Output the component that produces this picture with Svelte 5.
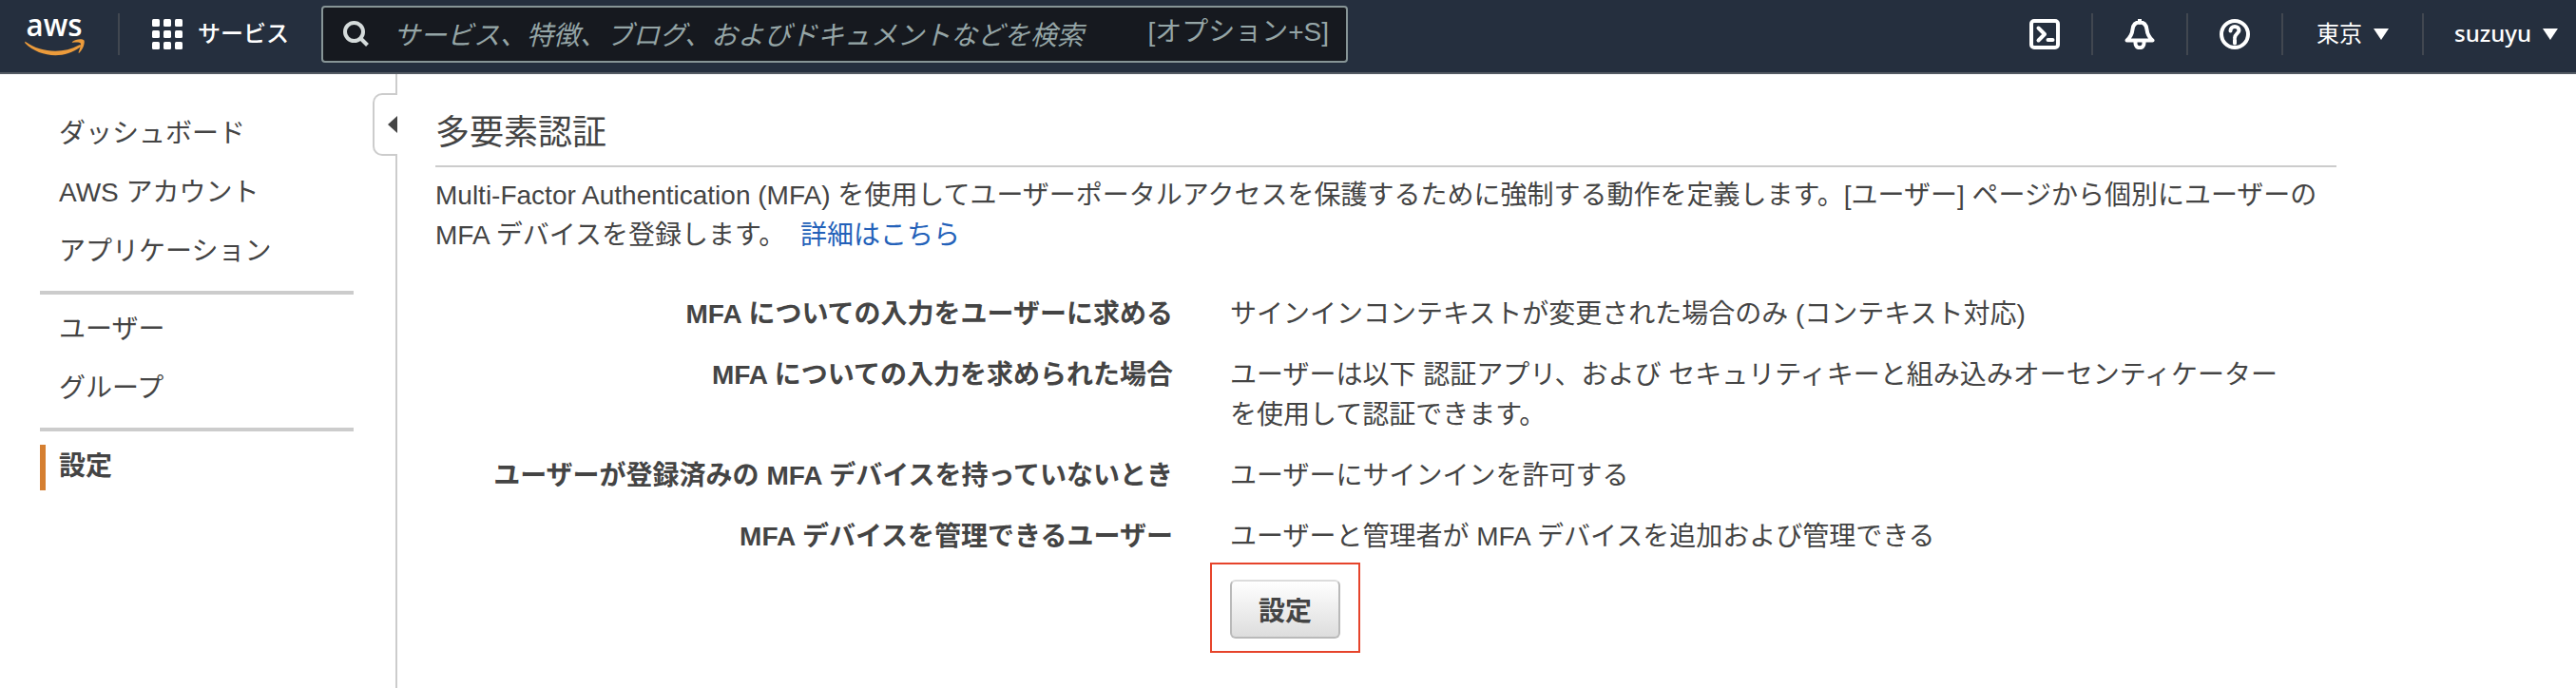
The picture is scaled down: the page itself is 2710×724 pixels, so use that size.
<script>
  const navGroups = [
    ['ダッシュボード', 'AWS アカウント', 'アプリケーション'],
    ['ユーザー', 'グループ'],
  ];
  const settings = [
    { label: 'MFA についての入力をユーザーに求める', lines: ['サインインコンテキストが変更された場合のみ (コンテキスト対応)'] },
    {
      label: 'MFA についての入力を求められた場合',
      lines: [
        'ユーザーは以下 認証アプリ、および セキュリティキーと組み込みオーセンティケーター',
        'を使用して認証できます。',
      ],
    },
    { label: 'ユーザーが登録済みの MFA デバイスを持っていないとき', lines: ['ユーザーにサインインを許可する'] },
    { label: 'MFA デバイスを管理できるユーザー', lines: ['ユーザーと管理者が MFA デバイスを追加および管理できる'] },
  ];
  const cells = [0, 1, 2, 3, 4, 5, 6, 7, 8];
</script>

<div class="page">
  <header>
    <svg class="logo" width="66" height="44" viewBox="0 0 66 44">
      <text x="1.5" y="23" textLength="59" lengthAdjust="spacingAndGlyphs">aws</text>
      <path d="M1 29 C17 40.500 40 42 57 32.500 C59 31.500 60 33 58.500 34.500 C41 48 15 45 0.500 30.500 C0 29.500 0.200 28.500 1 29Z" />
      <path d="M50 29 C54 25.500 61 25.500 62.500 27.500 C63.500 30 61.500 37 57.500 40.500 C57 41 56.300 40.600 56.600 40 C58 36.500 59.500 32 58.700 30.500 C57.500 29 53.500 29.500 50.500 29.800 C49.800 29.800 49.500 29.400 50 29Z" />
    </svg>
    <i class="bar first"></i>
    <div class="services">
      <svg width="32" height="32" viewBox="0 0 32 32">
        {#each cells as c}
          <rect x={(c % 3) * 12} y={Math.floor(c / 3) * 12} width="8" height="8" rx="1.5" />
        {/each}
      </svg>
      <span>サービス</span>
    </div>
    <div class="search">
      <svg width="30" height="30" viewBox="0 0 30 30">
        <circle cx="12.500" cy="12.500" r="9.500" />
        <path d="M19 19 L26.500 26.500" />
      </svg>
      <em>サービス、特徴、ブログ、およびドキュメントなどを検索</em>
      <span>[オプション+S]</span>
    </div>
    <div class="tools">
      <div class="tool">
        <svg width="32" height="32" viewBox="0 0 32 32">
          <rect x="2" y="2" width="28" height="28" rx="3" />
          <path d="M9.500 9.500 L16 16 L9.500 22.500 M19.500 22 H24.500" />
        </svg>
      </div>
      <div class="tool">
        <svg width="32" height="32" viewBox="0 0 32 32">
          <path d="M16 0.500 V4 M2.500 22.500 C6.500 19 8 16 8.500 11 C9 6 12 3.500 16 3.500 C20 3.500 23 6 23.500 11 C24 16 25.500 19 29.500 22.500 Z M11.500 23 V25.500 C11.500 28.500 13.500 30.200 16 30.200 C18.500 30.200 20.500 28.500 20.500 25.500 V23" />
        </svg>
      </div>
      <div class="tool">
        <svg width="32" height="32" viewBox="0 0 32 32">
          <circle cx="16" cy="16" r="14" />
          <path d="M11.500 12.500 C11.500 9.500 13.500 8 16 8 C18.500 8 20.500 9.500 20.500 12 C20.500 15 16 15.500 16 20 M16 22 V25.500" />
        </svg>
      </div>
      <div class="tool region"><span>東京</span><b class="caret"></b></div>
      <div class="tool user"><span>suzuyu</span><b class="caret"></b></div>
    </div>
  </header>

  <div class="body">
    <nav>
      {#each navGroups as group}
        <div class="group">
          {#each group as item}<a>{item}</a>{/each}
        </div>
      {/each}
      <a class="active">設定</a>
      <div class="collapse">
        <svg width="10" height="18" viewBox="0 0 10 18"><path d="M10 0 V18 L0 9Z" /></svg>
      </div>
    </nav>
    <main>
      <h1>多要素認証</h1>
      <p>
        <span class="line first-line">Multi-Factor Authentication (MFA) を使用してユーザーポータルアクセスを保護するために強制する動作を定義します。[ユーザー] ページから個別にユーザーの</span>
        <span class="line">MFA デバイスを登録します。 <a class="link">詳細はこちら</a></span>
      </p>
      <dl>
        {#each settings as s}
          <dt>{s.label}</dt>
          <dd>{#each s.lines as l}<span class="line">{l}</span>{/each}</dd>
        {/each}
      </dl>
      <div class="highlight"><button>設定</button></div>
    </main>
  </div>
</div>

<style>
  :global(body) { margin: 0; background: #fff; }
  .page {
    width: 2710px; height: 724px; display: flex; flex-direction: column; overflow: hidden;
    font-family: "Liberation Sans", "Noto Sans CJK JP", sans-serif; font-size: 28px; line-height: 42px; color: #444;
  }
  header {
    flex: none; height: 78px; box-sizing: border-box; padding: 0 0 4px 26px; border-bottom: 2px solid #545b64;
    background: #252f3e; display: flex; align-items: center; color: #fff; white-space: nowrap;
    font-family: "Noto Sans", "Noto Sans CJK JP", sans-serif;
  }
  .logo { flex: none; margin-top: 2px; }
  .logo text { font: 600 33px "Open Sans", sans-serif; fill: #fff; }
  .logo path { fill: #ec9b3b; }
  .bar { width: 2px; height: 44px; background: #414750; margin-left: 32px; }
  .services { display: flex; align-items: center; gap: 16px; margin-left: 34px; width: 178px; font-size: 24px; font-weight: 500; }
  .services svg { fill: #fff; flex: none; }
  .services span { margin-top: -2px; }
  .search {
    width: 1080px; height: 60px; box-sizing: border-box; border: 2px solid #879596; border-radius: 4px;
    background: #16191f; color: #95a5a6; display: flex; align-items: center; padding: 0 18px 0 20px;
  }
  .search svg { fill: none; stroke: #d5dbdb; stroke-width: 4; margin-right: 24px; }
  .search em { flex: 1; }
  .search span { font-family: "Liberation Sans", "Noto Sans CJK JP", sans-serif; margin-top: -4px; }
  .tools { margin-left: auto; display: flex; align-items: center; }
  .tool { height: 44px; width: 98px; border-right: 2px solid #414750; display: flex; align-items: center; justify-content: center; font-size: 24px; }
  .tool svg { fill: none; stroke: #fff; stroke-width: 4; stroke-linecap: round; stroke-linejoin: round; }
  .region { width: 146px; gap: 12px; }
  .user { width: 160px; border: 0; gap: 12px; font-weight: 500; justify-content: flex-start; padding-left: 0; box-sizing: border-box; padding-left: 32px; }
  .tool span { margin-top: -2px; }
  .caret { width: 16px; height: 12px; background: #fff; clip-path: polygon(0 0, 100% 0, 50% 100%); }

  .body { flex: 1; display: flex; }
  nav { position: relative; width: 418px; box-sizing: border-box; border-right: 2px solid #ccc; padding: 32px 44px 0 42px; }
  nav a { display: block; height: 62px; line-height: 62px; padding-left: 20px; }
  .group { border-bottom: 4px solid #ccc; padding-bottom: 10px; margin-bottom: 6px; }
  nav a.active { height: 48px; line-height: 46px; border-left: 6px solid #d57f31; padding-left: 14px; margin-top: 14px; font-weight: 700; }
  .collapse {
    position: absolute; left: 392px; top: 20px; width: 26px; height: 66px; box-sizing: border-box;
    border: 2px solid #ccc; border-right: 0; border-radius: 10px 0 0 10px; background: #fff;
    display: flex; align-items: center; justify-content: flex-end;
  }
  .collapse svg { fill: #444; }
  main { margin-left: 40px; width: 2000px; }
  h1 { margin: 0; font-size: 36px; font-weight: 400; line-height: 54px; padding: 35px 0 7px; border-bottom: 2px solid #ccc; }
  p { margin: 9px 0 0; }
  .line { display: block; white-space: nowrap; }
  .link { color: #2361b9; margin-left: 8px; }
  dl { margin: 41px 0 0; display: grid; grid-template-columns: 776px 1fr; column-gap: 60px; row-gap: 22px; }
  dt { text-align: right; font-weight: 700; white-space: nowrap; }
  dd { margin: 0; }
  .highlight { margin: 6px 0 0 815px; width: 158px; height: 95px; box-sizing: border-box; border: 2px solid #e6442b; padding: 16px 0 0 19px; }
  button {
    width: 116px; height: 62px; border: 2px solid #b9b9b9; border-top-color: #dcdcdc; border-radius: 6px;
    background: linear-gradient(#fff, #ddd); color: #444; padding: 0;
    font: 700 28px "Liberation Sans", "Noto Sans CJK JP", sans-serif;
  }
</style>
